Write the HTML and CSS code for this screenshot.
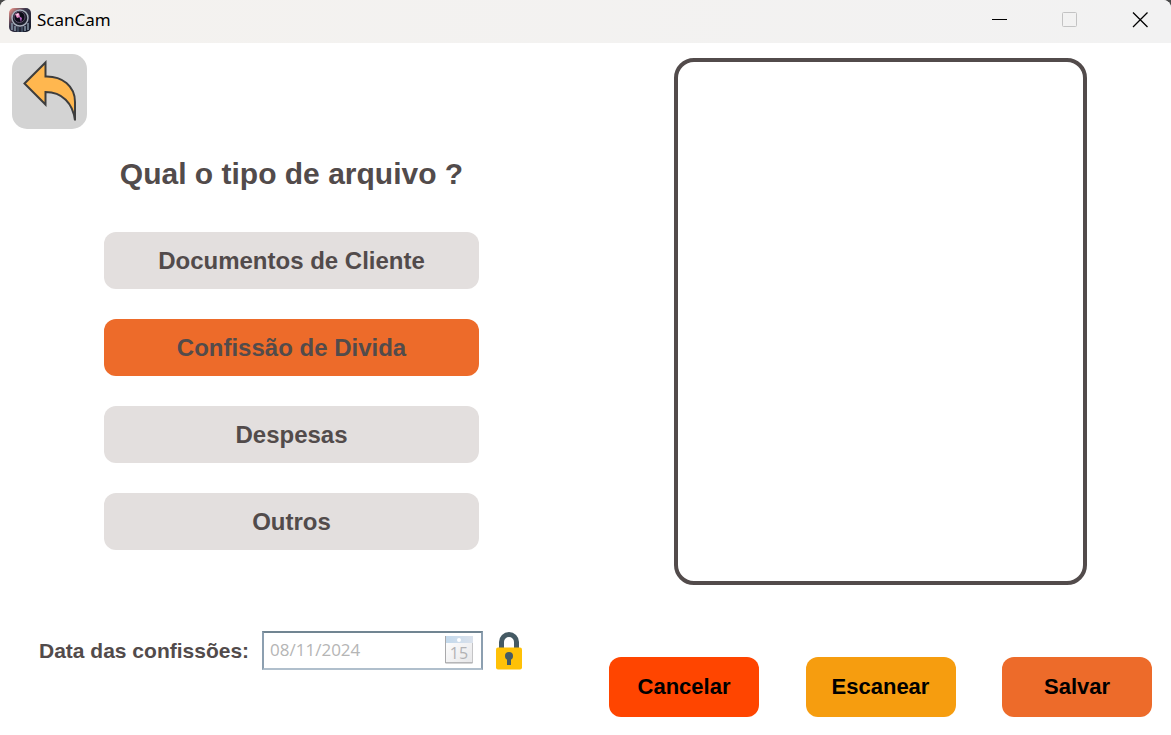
FILE: index.html
```html
<!DOCTYPE html>
<html lang="pt-BR">
<head>
<meta charset="utf-8">
<meta name="viewport" content="width=device-width, initial-scale=1">
<title>ScanCam</title>
<link rel="stylesheet" href="styles.css">
</head>
<body>
<div class="window">
  <header class="titlebar">
    <svg class="app-icon" viewBox="0 0 24 24" aria-hidden="true">
      <defs>
        <linearGradient id="shell" x1="0" y1="0" x2="1" y2="1">
          <stop offset="0" stop-color="#ffa093"/>
          <stop offset=".4" stop-color="#39344a"/>
          <stop offset="1" stop-color="#101826"/>
        </linearGradient>
      </defs>
      <rect x="1" y="0" width="22" height="24" rx="5" fill="url(#shell)"/>
      <path d="M4 15v7M7 18v5M17 18v5M20 15v7" stroke="#8595a5" stroke-width="1.5"/>
      <path d="M10 19v5M14 19v5" stroke="#3d4a5c" stroke-width="2"/>
      <circle cx="12" cy="10" r="8" fill="#1c1e2c" stroke="#a9b0bd" stroke-width="1.5"/>
      <circle cx="11.500" cy="9" r="5.500" fill="#0c0c18" stroke="#5c4d69"/>
      <path d="M7 6l4-1 1 4-3 1z" fill="#e98cc4"/>
      <path d="M11 8l3 2-1 4z" fill="#b55fbf"/>
      <circle cx="9.500" cy="6.500" r="1" fill="#ffe3ee"/>
    </svg>
    <span class="app-name">ScanCam</span>
    <div class="window-controls">
      <button class="window-button" type="button" aria-label="Minimizar">
        <svg viewBox="0 0 16 16"><path d="M0 7.500h15" stroke="#000"/></svg>
      </button>
      <button class="window-button" type="button" aria-label="Maximizar" disabled>
        <svg viewBox="0 0 16 16"><rect x=".5" y=".5" width="14" height="14" rx="1" fill="none" stroke="#c3c3c3"/></svg>
      </button>
      <button class="window-button window-close" type="button" aria-label="Fechar">
        <svg viewBox="0 0 16 16"><path d="M1 .5l14.500 14.500M15.500 .5L1 15" stroke="#000" stroke-width="1.300"/></svg>
      </button>
    </div>
  </header>

  <main class="content">
    <section class="options">
      <button class="back" type="button" aria-label="Voltar">
        <svg viewBox="0 0 75 75"><path d="M12.500 29.500L33.500 8.500V22.500C50 22 63 32 63 48V66.500C61 49 50 38 33.500 38V50.500Z" fill="#ffb74f" stroke="#3d3d3d" stroke-width="2"/></svg>
      </button>
      <h1 class="question">Qual o tipo de arquivo ?</h1>
      <div class="types">
        <button class="type" type="button">Documentos de Cliente</button>
        <button class="type type-selected" type="button" aria-pressed="true">Confissão de Divida</button>
        <button class="type" type="button">Despesas</button>
        <button class="type" type="button">Outros</button>
      </div>
      <div class="date-row">
        <label class="date-label" for="date">Data das confissões:</label>
        <div class="date-field">
          <input class="date-input" id="date" type="text" value="08/11/2024" disabled>
          <button class="calendar" type="button" aria-label="Abrir calendário" disabled>
            <svg viewBox="0 0 30 30" aria-hidden="true">
              <defs>
                <linearGradient id="page" x1="0" y1="0" x2="1" y2="1">
                  <stop offset="0" stop-color="#fff"/>
                  <stop offset="1" stop-color="#e7e7e9"/>
                </linearGradient>
                <linearGradient id="band">
                  <stop offset="0" stop-color="#c3d9ec"/>
                  <stop offset="1" stop-color="#dbe2ec"/>
                </linearGradient>
              </defs>
              <rect x="1.500" y="1.500" width="27" height="26" fill="url(#page)" stroke="#c4c4c6"/>
              <path d="M1.500 1v27h27" fill="none" stroke="#a9a9ab"/>
              <rect x="2" y="1" width="27" height="7" fill="url(#band)"/>
              <circle cx="15" cy="5" r="2" fill="#fff"/>
              <text class="calendar-day" x="15" y="24" text-anchor="middle">15</text>
            </svg>
          </button>
        </div>
        <svg class="lock" viewBox="0 0 26 38" role="img" aria-label="Bloqueado">
          <path d="M5.500 17V10a7.500 7.500 0 0 1 15 0V17" fill="none" stroke="#455a64" stroke-width="5"/>
          <rect y="15.500" width="26" height="22" rx="2" fill="#ffc107"/>
          <circle cx="13" cy="24" r="4" fill="#455a64"/>
          <path d="M11 25h4v8h-4z" fill="#455a64"/>
        </svg>
      </div>
    </section>

    <section class="scan">
      <div class="preview"></div>
      <div class="actions">
        <button class="action action-cancel" type="button">Cancelar</button>
        <button class="action action-scan" type="button">Escanear</button>
        <button class="action action-save" type="button">Salvar</button>
      </div>
    </section>
  </main>
</div>
</body>
</html>
```
FILE: styles.css
```css
* {
  box-sizing: border-box;
}

body {
  margin: 0;
  background: #4a4a4a;
  font-family: "Liberation Sans", Arial, sans-serif;
}

button {
  margin: 0;
  padding: 0;
  border: 0;
  font-family: inherit;
  font-weight: bold;
}

svg {
  display: block;
}

.window {
  display: flex;
  flex-direction: column;
  min-height: 100vh;
  overflow: hidden;
  background: #fff;
  border-radius: 8px 8px 0 0;
}

.titlebar {
  display: flex;
  align-items: center;
  height: 43px;
  padding: 0 0 3px 8px;
  background: linear-gradient(90deg, #f4f2ef, #f2f2f2);
}

.app-icon {
  width: 24px;
  height: 24px;
}

.app-name {
  margin-left: 5px;
  color: #000;
  font: 17px/24px "Noto Sans", "Open Sans", sans-serif;
}

.window-controls {
  display: flex;
  margin-left: auto;
}

.window-button {
  display: grid;
  place-items: center;
  width: 70px;
  height: 40px;
  background: none;
}

.window-close {
  width: 62px;
  margin-left: 4px;
}

.window-button svg {
  width: 16px;
  height: 16px;
}

.content {
  flex: 1;
  display: grid;
  grid-template-columns: 583fr 588fr;
}

.options {
  display: flex;
  flex-direction: column;
  padding: 11px 0 65px;
}

.back {
  align-self: flex-start;
  width: 75px;
  height: 75px;
  margin-left: 12px;
  background: #d3d3d3;
  border-radius: 15px;
}

.question {
  margin: 27px 0 41px;
  color: #524b4b;
  font-size: 30px;
  line-height: 35px;
  text-align: center;
}

.types {
  display: flex;
  flex-direction: column;
  gap: 30px;
  padding: 0 104px;
}

.type {
  height: 57px;
  background: #e3dfde;
  border-radius: 12px;
  color: #524b4b;
  font-size: 24px;
}

.type-selected {
  background: #ed6b2a;
}

.date-row {
  display: flex;
  align-items: center;
  margin-top: auto;
  padding-left: 39px;
}

.date-label {
  color: #524b4b;
  font-size: 21px;
  font-weight: bold;
  white-space: nowrap;
}

.date-field {
  display: flex;
  align-items: center;
  width: 221px;
  height: 39px;
  margin-left: 13px;
  padding: 0 7px 2px 6px;
  border: 2px solid;
  border-color: #718592 #8c9fb0 #b0bfcc;
}

.date-input {
  flex: 1;
  min-width: 0;
  padding: 0;
  border: 0;
  background: none;
  color: #b5b5b5;
  font: 17px "Open Sans", "Noto Sans", sans-serif;
}

.calendar {
  width: 30px;
  height: 30px;
  background: none;
}

.calendar-day {
  fill: #b2b2b4;
  font: 16px "Open Sans", sans-serif;
}

.lock {
  width: 26px;
  height: 38px;
  margin-left: 13px;
}

.scan {
  display: flex;
  flex-direction: column;
  align-items: center;
  padding: 15px 19px 18px 26px;
}

.preview {
  flex: 1;
  width: 76%;
  border: 4px solid #524b4b;
  border-radius: 20px;
}

.actions {
  display: flex;
  justify-content: space-between;
  align-self: stretch;
  margin-top: 72px;
}

.action {
  width: 150px;
  height: 60px;
  border-radius: 12px;
  color: #000;
  font-size: 22px;
}

.action-cancel {
  background: #ff4500;
}

.action-scan {
  background: #f69d0f;
}

.action-save {
  background: #ed6b2a;
}
```
